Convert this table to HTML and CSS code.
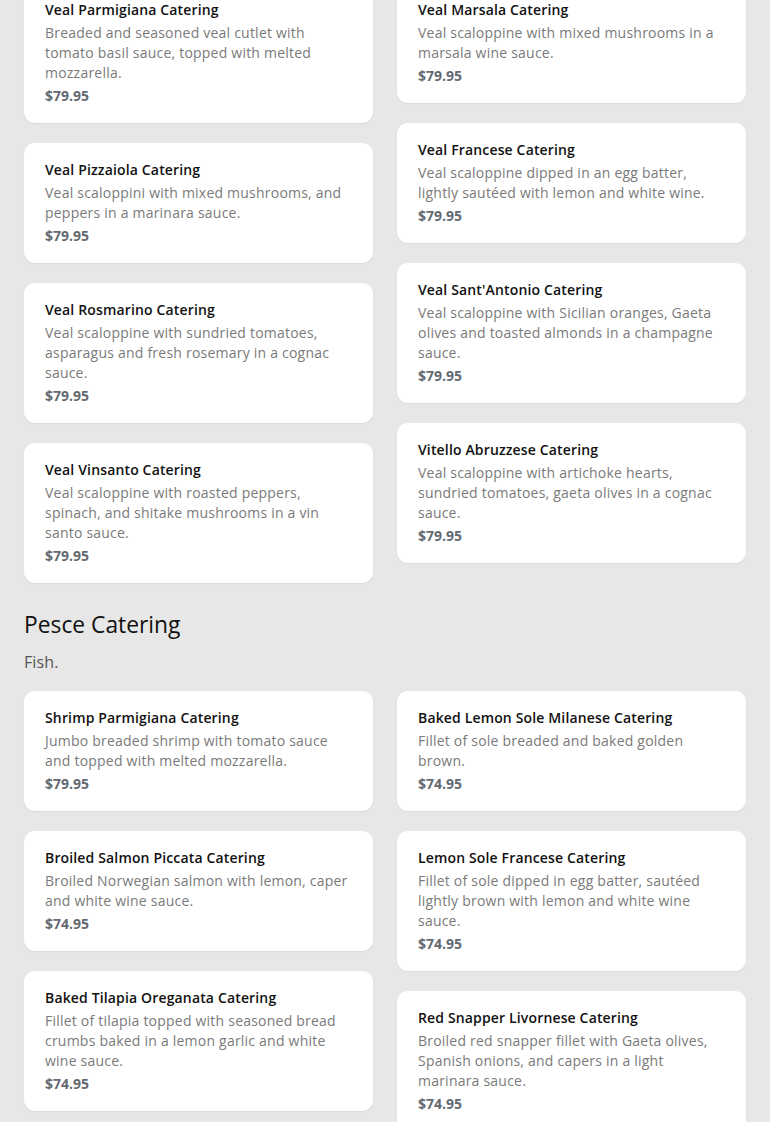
FILE: index.html
```html
<!DOCTYPE html>
<html lang="en">
<head>
<meta charset="utf-8">
<title>Catering Menu</title>
<link rel="stylesheet" href="styles.css">
</head>
<body>
<main class="page">
  <section class="section section-first">
    <div class="grid">
      <div class="col">
        <article class="card card-tall">
          <h3 class="card-title">Veal Parmigiana Catering</h3>
          <p class="card-desc">Breaded and seasoned veal cutlet with tomato basil sauce, topped with melted mozzarella.</p>
          <p class="card-price">$79.95</p>
        </article>
        <article class="card">
          <h3 class="card-title">Veal Pizzaiola Catering</h3>
          <p class="card-desc">Veal scaloppini with mixed mushrooms, and peppers in a marinara sauce.</p>
          <p class="card-price">$79.95</p>
        </article>
        <article class="card">
          <h3 class="card-title">Veal Rosmarino Catering</h3>
          <p class="card-desc">Veal scaloppine with sundried tomatoes, asparagus and fresh rosemary in a cognac sauce.</p>
          <p class="card-price">$79.95</p>
        </article>
        <article class="card">
          <h3 class="card-title">Veal Vinsanto Catering</h3>
          <p class="card-desc">Veal scaloppine with roasted peppers, spinach, and shitake mushrooms in a vin santo sauce.</p>
          <p class="card-price">$79.95</p>
        </article>
      </div>
      <div class="col">
        <article class="card">
          <h3 class="card-title">Veal Marsala Catering</h3>
          <p class="card-desc">Veal scaloppine with mixed mushrooms in a marsala wine sauce.</p>
          <p class="card-price">$79.95</p>
        </article>
        <article class="card">
          <h3 class="card-title">Veal Francese Catering</h3>
          <p class="card-desc">Veal scaloppine dipped in an egg batter, lightly sautéed with lemon and white wine.</p>
          <p class="card-price">$79.95</p>
        </article>
        <article class="card">
          <h3 class="card-title">Veal Sant'Antonio Catering</h3>
          <p class="card-desc">Veal scaloppine with Sicilian oranges, Gaeta olives and toasted almonds in a champagne sauce.</p>
          <p class="card-price">$79.95</p>
        </article>
        <article class="card">
          <h3 class="card-title">Vitello Abruzzese Catering</h3>
          <p class="card-desc">Veal scaloppine with artichoke hearts, sundried tomatoes, gaeta olives in a cognac sauce.</p>
          <p class="card-price">$79.95</p>
        </article>
      </div>
    </div>
  </section>

  <section class="section">
    <h2 class="section-title">Pesce Catering</h2>
    <p class="section-desc">Fish.</p>
    <div class="grid">
      <div class="col">
        <article class="card">
          <h3 class="card-title">Shrimp Parmigiana Catering</h3>
          <p class="card-desc">Jumbo breaded shrimp with tomato sauce and topped with melted mozzarella.</p>
          <p class="card-price">$79.95</p>
        </article>
        <article class="card">
          <h3 class="card-title">Broiled Salmon Piccata Catering</h3>
          <p class="card-desc">Broiled Norwegian salmon with lemon, caper and white wine sauce.</p>
          <p class="card-price">$74.95</p>
        </article>
        <article class="card">
          <h3 class="card-title">Baked Tilapia Oreganata Catering</h3>
          <p class="card-desc">Fillet of tilapia topped with seasoned bread crumbs baked in a lemon garlic and white wine sauce.</p>
          <p class="card-price">$74.95</p>
        </article>
      </div>
      <div class="col">
        <article class="card">
          <h3 class="card-title">Baked Lemon Sole Milanese Catering</h3>
          <p class="card-desc">Fillet of sole breaded and baked golden brown.</p>
          <p class="card-price">$74.95</p>
        </article>
        <article class="card">
          <h3 class="card-title">Lemon Sole Francese Catering</h3>
          <p class="card-desc">Fillet of sole dipped in egg batter, sautéed lightly brown with lemon and white wine sauce.</p>
          <p class="card-price">$74.95</p>
        </article>
        <article class="card">
          <h3 class="card-title">Red Snapper Livornese Catering</h3>
          <p class="card-desc">Broiled red snapper fillet with Gaeta olives, Spanish onions, and capers in a light marinara sauce.</p>
          <p class="card-price">$74.95</p>
        </article>
      </div>
    </div>
  </section>
</main>
</body>
</html>
```

FILE: styles.css
```css
* {
  box-sizing: border-box;
}

html, body {
  margin: 0;
  padding: 0;
  background: #e7e7e7;
}

body {
  font-family: "Open Sans", "Liberation Sans", sans-serif;
  color: #1a1a1a;
  overflow: hidden;
}

.page {
  padding: 0 24px;
}

.section-first {
  margin-top: -17px;
}

.section + .section {
  margin-top: 28px;
}

.section-title {
  margin: 0;
  font-size: 22.8px;
  line-height: 28px;
  font-weight: 400;
  color: #111;
}

.section-desc {
  margin: 11px 0 17px;
  font-size: 16px;
  line-height: 24px;
  letter-spacing: 0.1px;
  color: #555;
}

.grid {
  display: grid;
  grid-template-columns: 1fr 1fr;
  column-gap: 24px;
  align-items: start;
}

.col {
  display: flex;
  flex-direction: column;
  gap: 20px;
}

.card {
  background: #fff;
  border-radius: 11px;
  padding: 16px 21px 17px;
  box-shadow: 0 1px 2px rgba(0, 0, 0, 0.06);
}

.card-title {
  margin: 0 0 3px;
  font-size: 14px;
  line-height: 21px;
  font-weight: 600;
  letter-spacing: 0.15px;
  color: #111;
}

.card-desc {
  margin: 0;
  font-size: 14px;
  line-height: 20px;
  letter-spacing: 0.22px;
  color: #7a7a7a;
}

.card-price {
  margin: 3px 0 0;
  font-size: 14px;
  line-height: 20px;
  font-weight: 700;
  color: #646a72;
}
```
